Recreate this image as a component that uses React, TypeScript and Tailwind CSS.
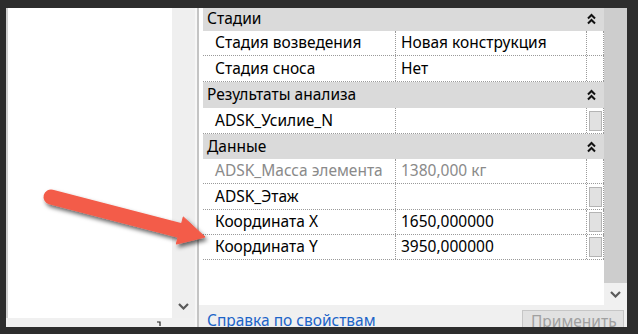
type Row =
  | { kind: "header"; label: string; h: string }
  | {
      kind: "prop";
      name: string;
      value: string;
      h: string;
      btn?: boolean;
      muted?: boolean;
    };

const rows: Row[] = [
  { kind: "header", label: "Стадии", h: "h-[25px]" },
  { kind: "prop", name: "Стадия возведения", value: "Новая конструкция", h: "h-[25px]" },
  { kind: "prop", name: "Стадия сноса", value: "Нет", h: "h-[26px]" },
  { kind: "header", label: "Результаты анализа", h: "h-[26px]" },
  { kind: "prop", name: "ADSK_Усилие_N", value: "", h: "h-[26px]", btn: true },
  { kind: "header", label: "Данные", h: "h-[25px]" },
  { kind: "prop", name: "ADSK_Масса элемента", value: "1380,000 кг", h: "h-[25px]", muted: true },
  { kind: "prop", name: "ADSK_Этаж", value: "", h: "h-[26px]", btn: true },
  { kind: "prop", name: "Координата X", value: "1650,000000", h: "h-[25px]", btn: true },
  { kind: "prop", name: "Координата Y", value: "3950,000000", h: "h-[25px]", btn: true },
];

const CollapseIcon = () => (
  <svg width="9" height="12" viewBox="0 0 9 12" fill="none">
    <polyline points="1,5.5 4.5,2 8,5.5" stroke="#111" strokeWidth="2" />
    <polyline points="1,10.5 4.5,7 8,10.5" stroke="#111" strokeWidth="2" />
  </svg>
);

const ChevronDown = () => (
  <svg width="11" height="7" viewBox="0 0 11 7" fill="none">
    <polyline points="1,1 5.5,5.5 10,1" stroke="#5a5a5a" strokeWidth="2.2" />
  </svg>
);

const Arrow = () => (
  <svg
    className="absolute inset-0 pointer-events-none"
    width="638"
    height="334"
    viewBox="0 0 638 334"
  >
    <defs>
      <filter id="arrowShadow" x="-20%" y="-50%" width="140%" height="200%">
        <feDropShadow dx="2" dy="3" stdDeviation="2" floodColor="#000" floodOpacity="0.6" />
      </filter>
    </defs>
    <g filter="url(#arrowShadow)" fill="#f35b49" stroke="#f35b49">
      <line x1="51" y1="197" x2="182" y2="231" strokeWidth="15" strokeLinecap="round" />
      <polygon points="183.3,216.9 205,237 176.3,244.1" strokeWidth="1" strokeLinejoin="round" />
    </g>
  </svg>
);

const PropertyGrid = () => (
  <div className="flex flex-col w-[401px] -mt-[2px]">
    {rows.map((r, i) =>
      r.kind === "header" ? (
        <div key={i} className={`flex items-center bg-[#dadada] pl-[4px] ${r.h}`}>
          <span className="flex-1">{r.label}</span>
          <span className="mr-[8px] flex">
            <CollapseIcon />
          </span>
        </div>
      ) : (
        <div
          key={i}
          className={`flex border-b border-dotted border-[#9a9a9a] ${r.h} ${
            r.muted ? "text-[#8a8a8a]" : "text-black"
          }`}
        >
          <div className="w-[193px] pl-[12px] flex items-center border-r border-dotted border-[#9a9a9a] whitespace-nowrap overflow-hidden">
            {r.name}
          </div>
          <div className="w-[191px] pl-[5px] flex items-center border-r border-dotted border-[#9a9a9a] whitespace-nowrap">
            {r.value}
          </div>
          <div className="w-[17px] flex items-center border-r border-dotted border-[#9a9a9a]">
            {r.btn && (
              <div className="ml-[2px] w-[13px] h-[20px] bg-[#e1e1e1] border border-[#b4b4b4]" />
            )}
          </div>
        </div>
      )
    )}
  </div>
);

export default function App() {
  return (
    <div className="relative w-[638px] h-[334px] overflow-hidden bg-[#2d2d2d] pt-[8px] pl-[6px] pr-[11px] pb-[7px] font-['Noto_Sans',sans-serif] text-[15.5px]">
      <div className="flex h-full">
        {/* Left tree pane */}
        <div className="flex flex-col w-[189px]">
          <div className="flex h-[310px]">
            <div className="flex-1 bg-white border-l-2 border-[#d0d0d0]" />
            <div className="w-[23px] bg-[#efefef] flex flex-col justify-end items-center pb-[8px]">
              <ChevronDown />
            </div>
          </div>
          <div className="flex-1 bg-[#f0f0f0] flex items-end pl-[151px] pb-[1px]">
            <svg width="5" height="5" viewBox="0 0 5 5">
              <path d="M0 1 L3 1 L3 5" stroke="#222" strokeWidth="1.2" fill="none" />
            </svg>
          </div>
        </div>

        {/* Splitter */}
        <div className="flex w-[4px]">
          <div className="w-[2px] bg-[#f7f7f7]" />
          <div className="w-[2px] bg-[#c4c4c4]" />
        </div>

        {/* Properties pane */}
        <div className="flex flex-col flex-1 bg-[#f0f0f0]">
          <div className="flex h-[297px]">
            <div className="flex-1 bg-white pl-[4px] overflow-hidden">
              <PropertyGrid />
            </div>
            <div className="w-[23px] flex flex-col">
              <div className="h-[275px] bg-[#cdcdcd]" />
              <div className="flex-1 bg-[#f0f0f0] flex items-center justify-center">
                <ChevronDown />
              </div>
            </div>
          </div>
          <div className="flex-1 flex items-start overflow-hidden">
            <span className="pl-[8px] pt-[5px] leading-[20px] text-[#1c64c8] whitespace-nowrap">
              Справка по свойствам
            </span>
            <div className="ml-auto mr-[3px] mt-[5px] w-[102px] h-[24px] bg-[#e1e1e1] border border-[#c6c6c6] pl-[8px] leading-[20px] text-[#a0a0a0]">
              Применить
            </div>
          </div>
        </div>
      </div>
      <Arrow />
    </div>
  );
}
